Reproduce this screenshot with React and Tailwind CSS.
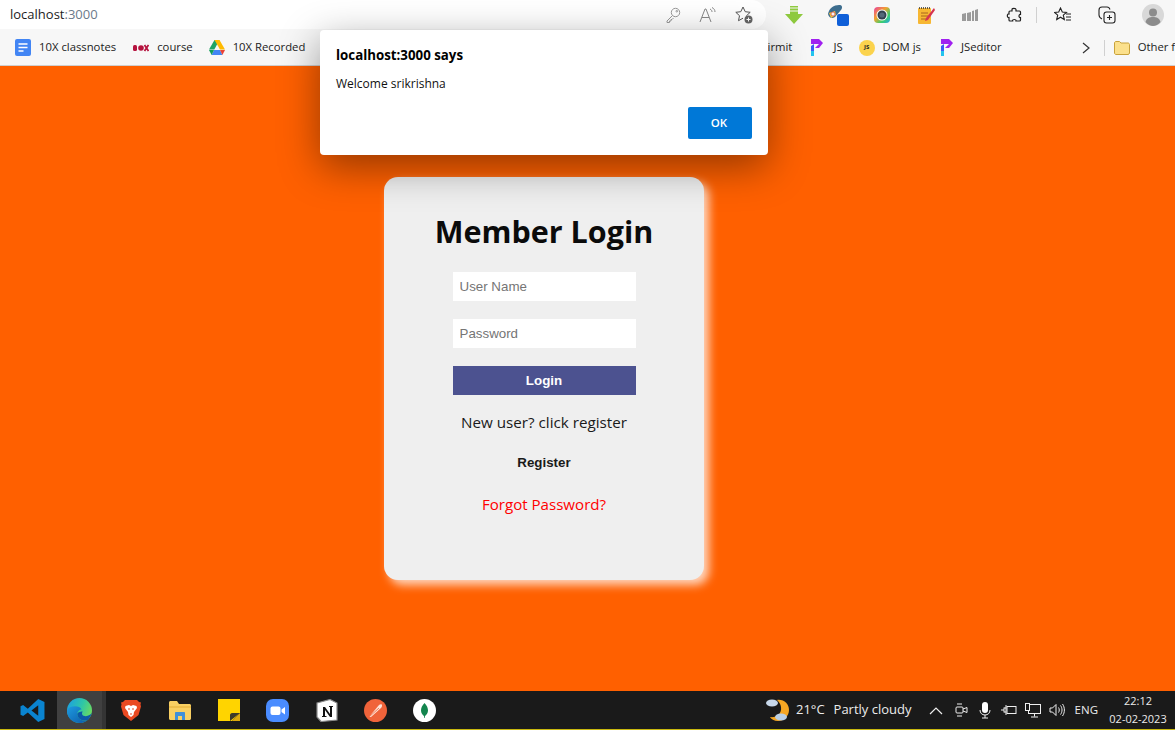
import React from "react";

const ui = "font-['Open_Sans','Noto_Sans',sans-serif]";
const arial = "font-['Liberation_Sans',sans-serif]";

function DocsIcon() {
  return (
    <svg width="16" height="17" viewBox="0 0 16 17">
      <rect width="16" height="17" rx="2" fill="#4285f4" />
      <path d="M3.5 5h9M3.5 8.5h9M3.5 12h5" stroke="#fff" strokeWidth="1.6" />
    </svg>
  );
}

function CourseIcon() {
  return (
    <svg width="16" height="8" viewBox="0 0 16 8">
      <rect x="0" y="1" width="4" height="6" rx="1.5" fill="#b5123e" />
      <circle cx="8" cy="4" r="2.8" fill="#b5123e" />
      <path d="M11.5 1l4 6M15.5 1l-4 6" stroke="#b5123e" strokeWidth="1.8" />
    </svg>
  );
}

function DriveIcon() {
  return (
    <svg width="16" height="15" viewBox="0 0 16 15">
      <path d="M5.5 0h5L5.300 9.500H0z" fill="#1fa463" />
      <path d="M5.5 0h5L16 9.500h-5z" fill="#ffba00" />
      <path d="M5 10h6l2.400 5H2.600z" fill="#4285f4" />
      <path d="M0 10h5l-2.400 5z" fill="#0f9d58" />
      <path d="M11 10h5l-2.600 5z" fill="#ea4335" />
    </svg>
  );
}

function PrepIcon() {
  return (
    <svg width="12" height="17" viewBox="0 0 12 17">
      <path d="M0 0h8l4 4-4 5H4L8 5H0z" fill="#a020f0" />
      <path d="M0 7l3-2v7H0z" fill="#3a5cf5" />
      <path d="M0 12h3v5H0z" fill="#22c4ee" />
    </svg>
  );
}

function BookmarkItem({ icon, label, className = "", labelClass = "ml-2" }) {
  return (
    <div className={`flex items-center shrink-0 whitespace-nowrap ${className}`}>
      {icon}
      <span className={labelClass}>{label}</span>
    </div>
  );
}

function ToolbarSlot({ children, className = "" }) {
  return <div className={`flex items-center justify-center h-full shrink-0 ${className}`}>{children}</div>;
}

function BrowserChrome() {
  return (
    <div className={`bg-[#f7f7f7] shrink-0 border-b border-[#cfcfcf] ${ui}`}>
      <div className="flex h-[30px] items-center">
        <div className="flex items-center shrink-0 w-[766px] h-[29px] bg-white rounded-r-[15px] pl-[10px] pr-[12px] -mt-[1px]">
          <span className="text-[13px] text-[#1c1c1c]">
            localhost<span className="text-[#6b7a8a]">:3000</span>
          </span>
          <div className="ml-auto flex items-center gap-[17px]">
            <svg width="18" height="18" viewBox="0 0 18 18" fill="none" stroke="#9a9a9a" strokeWidth="1">
              <circle cx="11.500" cy="6.500" r="4.200" />
              <circle cx="12.800" cy="5.200" r="0.800" />
              <path d="M8.500 9.500L3 15v1.500h2.500V15H7v-1.500h1l1.500-1.500" />
            </svg>
            <svg width="18" height="18" viewBox="0 0 18 18" fill="none" stroke="#888" strokeWidth="1">
              <path d="M1 16L6 3h1l5 13M3 11.500h7" />
              <path d="M11 3c1.500.8 2 1.800 2 3M13 1.500c2 1 3 2.600 3 4.500" />
            </svg>
            <svg width="20" height="20" viewBox="0 0 20 20" fill="none" stroke="#555" strokeWidth="1">
              <path d="M9 2l2.200 4.700 5 .6-3.700 3.400.6 2.800M9 2L6.800 6.700l-5 .6 3.700 3.400-1 5 4.500-2.500" />
              <circle cx="14.500" cy="14.500" r="4" fill="#666" stroke="none" />
              <path d="M14.500 12.500v4M12.500 14.500h4" stroke="#fff" />
            </svg>
          </div>
        </div>
        <div className="flex items-center h-full pl-[6px]">
          <ToolbarSlot className="w-[44px]">
            <svg width="18" height="19" viewBox="0 0 18 19">
              <path d="M5 0h8v8h5l-9 10L0 8h5z" fill="#8fca3f" />
              <path d="M5 2h8M5 5h8" stroke="#f7f7f7" strokeWidth="1" />
            </svg>
          </ToolbarSlot>
          <ToolbarSlot className="w-[44px]">
            <svg width="22" height="22" viewBox="0 0 22 22">
              <path d="M1 10C2 4 7 1 12 1c3 0 4 2 2 5l-6 7C5 15 2 14 1 10z" fill="#3d6d8e" />
              <path d="M2 9l6-2 1 4-5 3z" fill="#f5c23c" />
              <circle cx="6" cy="10" r="2" fill="#f4f4f4" stroke="#c33" strokeWidth="0.6" />
              <rect x="10" y="10" width="12" height="12" rx="2" fill="#0f5fd8" />
            </svg>
          </ToolbarSlot>
          <ToolbarSlot className="w-[44px]">
            <svg width="16" height="16" viewBox="0 0 16 16">
              <defs>
                <linearGradient id="ring" x1="0" y1="0" x2="1" y2="1">
                  <stop offset="0" stopColor="#e93ea0" />
                  <stop offset="0.4" stopColor="#f2a22f" />
                  <stop offset="0.7" stopColor="#3ccf6b" />
                  <stop offset="1" stopColor="#27a5e8" />
                </linearGradient>
              </defs>
              <rect width="16" height="16" rx="4" fill="url(#ring)" />
              <circle cx="8" cy="8" r="5.500" fill="#fff" />
              <circle cx="8" cy="8" r="4.500" fill="#33424f" />
              <circle cx="8" cy="8" r="2.600" fill="#55697a" />
            </svg>
          </ToolbarSlot>
          <ToolbarSlot className="w-[44px]">
            <svg width="17" height="17" viewBox="0 0 17 17">
              <rect x="0" y="1" width="13" height="16" rx="1" fill="#f7b733" />
              <path d="M1 1h11" stroke="#333" strokeWidth="1.400" strokeDasharray="1 1" />
              <path d="M3 6h7M3 9h7M3 12h5" stroke="#a8641e" strokeWidth="1" />
              <path d="M16 1L8 11l-1 3 3-1L17 3z" fill="#d6344f" />
            </svg>
          </ToolbarSlot>
          <ToolbarSlot className="w-[44px]">
            <svg width="16" height="12" viewBox="0 0 16 12" fill="#9a9a9a">
              <path d="M0 5l4-1v8H0zM5 4l4-1v9H5zM10 2l2-.5V12h-2zM13 1l3-1v12h-3z" />
            </svg>
          </ToolbarSlot>
          <ToolbarSlot className="w-[44px]">
            <svg width="16" height="16" viewBox="0 0 16 16" fill="none" stroke="#222" strokeWidth="1.200">
              <path d="M6 2.500C6 1 10 1 10 2.500V4h3.500c.6 0 1 .4 1 1v2.500c-2-.6-2 3.600 0 3V13c0 .6-.4 1-1 1H10c.6-2-4-2-3.400 0H4c-.6 0-1-.4-1-1v-2.500C.8 11 .8 6.500 3 7V5c0-.6.4-1 1-1h2z" />
            </svg>
          </ToolbarSlot>
          <div className="w-px h-[16px] shrink-0 bg-[#d0d0d0]" />
          <ToolbarSlot className="w-[48px] ml-[2px]">
            <svg width="18" height="17" viewBox="0 0 18 17" fill="none" stroke="#222" strokeWidth="1.100">
              <path d="M6.500 1l1.800 4 4.200.4-3.200 2.800 1 4.300-3.800-2.300-3.800 2.300 1-4.300L.5 5.400 4.700 5z" />
              <path d="M12 7h5M12 10h5M12 13h5" />
            </svg>
          </ToolbarSlot>
          <ToolbarSlot className="w-[40px]">
            <svg width="18" height="18" viewBox="0 0 18 18" fill="none" stroke="#222" strokeWidth="1.100">
              <rect x="6" y="6" width="11" height="11" rx="2.500" />
              <path d="M11.500 9v5M9 11.500h5" />
              <path d="M4 13C2 12 1 11 1 9V4c0-1.700 1.300-3 3-3h5c1.500 0 2.500.8 3 2.500" />
            </svg>
          </ToolbarSlot>
          <ToolbarSlot className="w-[48px] pl-[4px]">
            <svg width="22" height="22" viewBox="0 0 22 22">
              <circle cx="11" cy="11" r="11" fill="#d8d8d8" />
              <circle cx="11" cy="8.500" r="4" fill="#8c8c8c" />
              <path d="M3.500 18c1-4 4-5 7.500-5s6.500 1 7.500 5c-2 2.500-5 4-7.500 4s-5.500-1.500-7.500-4z" fill="#8c8c8c" />
            </svg>
          </ToolbarSlot>
        </div>
      </div>
      <div className="flex items-center h-[35px] text-[11.300px] text-[#222] overflow-hidden">
        <BookmarkItem icon={<DocsIcon />} label="10X classnotes" className="ml-[15px]" />
        <BookmarkItem icon={<CourseIcon />} label="course" className="ml-[17px]" />
        <BookmarkItem icon={<DriveIcon />} label="10X Recorded" className="ml-[16px]" />
        <span className="ml-[456px] shrink-0">Tirmit</span>
        <BookmarkItem icon={<PrepIcon />} label="JS" className="ml-[19px]" labelClass="ml-[10px]" />
        <BookmarkItem
          icon={
            <span className="flex items-center justify-center w-[16px] h-[16px] rounded-full bg-[#fbd34d] text-[6px] font-bold">
              JS
            </span>
          }
          label="DOM js"
          className="ml-[16px]"
        />
        <BookmarkItem icon={<PrepIcon />} label="JSeditor" className="ml-[20px]" />
        <svg className="ml-[79px] shrink-0" width="10" height="12" viewBox="0 0 10 12" fill="none" stroke="#333" strokeWidth="1.200">
          <path d="M2 1l6 5-6 5" />
        </svg>
        <div className="ml-[13px] w-px h-[16px] bg-[#d0d0d0] shrink-0" />
        <BookmarkItem
          icon={
            <svg width="16" height="14" viewBox="0 0 16 14">
              <path d="M.5 2c0-.8.6-1.500 1.500-1.500h3.500L7 2h7c.8 0 1.500.7 1.500 1.500V12c0 .8-.7 1.500-1.500 1.500H2C1.200 13.500.5 12.800.5 12z" fill="#fbe08c" stroke="#c8a23c" />
            </svg>
          }
          label="Other favorites"
          className="ml-[9px]"
        />
      </div>
    </div>
  );
}

function LoginCard() {
  return (
    <div className="flex flex-col items-center w-[320px] h-[403px] mt-[111px] ml-[384px] rounded-[14px] bg-[#efefef] pt-[32px] shadow-[5px_5px_10px_rgba(255,255,255,0.75)]">
      <h1 className={`text-[30.500px] leading-[44px] font-bold text-[#0b0b0b] ${ui}`}>Member Login</h1>
      <input
        placeholder="User Name"
        className={`mt-[19px] w-[183px] h-[29px] bg-white px-[7px] text-[13.330px] outline-none placeholder:text-[#757575] ${arial}`}
      />
      <input
        placeholder="Password"
        type="password"
        className={`mt-[18px] w-[183px] h-[29px] bg-white px-[7px] text-[13.330px] outline-none placeholder:text-[#757575] ${arial}`}
      />
      <button className={`mt-[18px] w-[183px] h-[29px] bg-[#4c5290] text-white text-[13.330px] font-bold ${arial}`}>
        Login
      </button>
      <p className={`mt-[15px] text-[15.200px] leading-[24px] text-[#1a1a1a] ${ui}`}>New user? click register</p>
      <button className={`mt-[21px] text-[13.330px] leading-[16px] font-bold text-[#1a1a1a] ${arial}`}>
        Register
      </button>
      <a className={`mt-[21px] text-[15.100px] leading-[24px] text-[#ff0000] ${ui}`}>Forgot Password?</a>
    </div>
  );
}

function AlertDialog() {
  return (
    <div className={`absolute left-[320px] top-[30px] w-[448px] h-[125px] rounded-[4px] bg-white p-4 shadow-[0_12px_40px_rgba(0,0,0,0.42)] ${ui}`}>
      <p className="text-[13.300px] leading-[18px] font-bold text-black">localhost:3000 says</p>
      <p className="mt-[11px] text-[12px] leading-[18px] text-[#111]">Welcome srikrishna</p>
      <div className="flex justify-end mt-[14px]">
        <button className="w-[64px] h-[32px] rounded-[2px] bg-[#0078d7] text-white text-[11.500px] font-semibold pr-[2px]">OK</button>
      </div>
    </div>
  );
}

function TaskButton({ children, active }) {
  return (
    <div className={`flex items-center justify-center w-[49px] h-full ${active ? "bg-[#404040] border-r-4 border-[#343434]" : ""}`}>
      {children}
    </div>
  );
}

function Taskbar() {
  return (
    <div className={`flex items-center h-[39px] shrink-0 bg-[#1a1a1a] text-[#ececec] border-b border-[#c9b80f] ${ui}`}>
      <div className="flex h-full pl-[8px]">
        <TaskButton>
          <svg width="25" height="25" viewBox="0 0 24 24">
            <path d="M17.500 1L23.500 3.800V20.200L17.500 23 7.500 13.800 3 17.200.5 16V8l2.500-1.200 4.500 3.400zM17.500 7L11 12l6.500 5z" fill="#0a84d0" />
          </svg>
        </TaskButton>
        <TaskButton active>
          <svg width="25" height="25" viewBox="0 0 24 24">
            <defs>
              <linearGradient id="edgeTop" x1="0" y1="0.2" x2="1" y2="0.6">
                <stop offset="0" stopColor="#1ba0e2" />
                <stop offset="0.55" stopColor="#2fc6a6" />
                <stop offset="1" stopColor="#6fdc5c" />
              </linearGradient>
              <linearGradient id="edgeLow" x1="0" y1="0" x2="1" y2="1">
                <stop offset="0" stopColor="#1e9be0" />
                <stop offset="1" stopColor="#0c5aa8" />
              </linearGradient>
            </defs>
            <circle cx="12" cy="12" r="12" fill="url(#edgeTop)" />
            <path d="M0 12c0 7 5.500 12 12 12 3 0 6-1 8-3-3 1-9 1-10-5-.5-3 2-5 4-5-1-2-3.500-3-6-3C4 8 1 9.500 0 12z" fill="url(#edgeLow)" />
            <path d="M10 16c1 6 7 6 10 5 2-2 3.500-4.500 4-7-1 2-3.500 3.500-6 3.500-3 0-4.500-2-3-4.500-2.500 0-5.500 1-5 3z" fill="#0c5aa8" />
          </svg>
        </TaskButton>
        <TaskButton>
          <svg width="20" height="21" viewBox="0 0 20 21">
            <path d="M4 0h12l2 2 2 .5-.5 2 .5 2L17.500 15 10 21 2.500 15 0 6.500l.5-2L0 2.500 2 2z" fill="#ea4a22" />
            <path d="M4.500 6l3.500-1 2 1 2-1 3.500 1 .5 2-3 4-.5 3L10 17l-2.500-2-.5-3-3-4z" fill="#fff" />
            <path d="M7 9h2M11 9h2M9 14h2" stroke="#ea4a22" strokeWidth="1.200" />
          </svg>
        </TaskButton>
        <TaskButton>
          <svg width="22" height="19" viewBox="0 0 22 19">
            <path d="M0 1.500C0 .7.700 0 1.500 0H8l2 3h10.500c.8 0 1.500.7 1.500 1.500V17.500c0 .8-.7 1.500-1.500 1.500h-19C.7 19 0 18.300 0 17.500z" fill="#f8cf62" />
            <path d="M0 6h22" stroke="#e3ad35" strokeWidth="1" />
            <path d="M6 19v-7c0-.6.400-1 1-1h8c.6 0 1 .4 1 1v7h-3v-4H9v4z" fill="#3f8fd8" />
          </svg>
        </TaskButton>
        <TaskButton>
          <svg width="22" height="22" viewBox="0 0 22 22">
            <path d="M0 0h22v14l-8 8H0z" fill="#ffd400" />
            <path d="M22 14v8h-8z" fill="#dca90e" />
            <path d="M12 22v-6c0-1 1-2 2-2h8z" fill="#3d3a2a" />
          </svg>
        </TaskButton>
        <TaskButton>
          <svg width="23" height="23" viewBox="0 0 23 23">
            <rect width="23" height="23" rx="7" fill="#4a8cff" />
            <rect x="4.500" y="7.500" width="10" height="8.500" rx="2" fill="#fff" />
            <path d="M15.500 10.500l3.500-2.500v7.500l-3.500-2.500z" fill="#fff" />
          </svg>
        </TaskButton>
        <TaskButton>
          <svg width="22" height="23" viewBox="0 0 22 23">
            <path d="M1 4l13-3.500L21 4v17L5 22.500 1 18z" fill="#fff" stroke="#8a8a8a" strokeWidth="1.200" />
            <path d="M7 8h2l5 7V8h-1V7h4v1h-1v10h-2L9 11v6h1.500v1H6v-1h1z" fill="#111" />
          </svg>
        </TaskButton>
        <TaskButton>
          <svg width="23" height="23" viewBox="0 0 23 23">
            <circle cx="11.500" cy="11.500" r="11.500" fill="#f0633a" />
            <path d="M5 18L15 6c1-1 3-1 3 0 0 1 0 2-1 3L7 18z" fill="#fde3d8" />
            <path d="M5 18l10-9" stroke="#f0633a" strokeWidth="0.800" />
          </svg>
        </TaskButton>
        <TaskButton>
          <svg width="23" height="23" viewBox="0 0 23 23">
            <circle cx="11.500" cy="11.500" r="11.500" fill="#fff" />
            <path d="M11.500 4c2.500 2.500 3.500 5 3.500 7.500s-1.500 4.500-3 5.500l-.2 2h-.6l-.2-2c-1.500-1-3-3-3-5.500S9 6.500 11.500 4z" fill="#13854e" />
          </svg>
        </TaskButton>
      </div>
      <div className="ml-auto flex items-center h-full text-[13px]">
        <svg width="26" height="26" viewBox="0 0 26 26">
          <path d="M12 3c7-1 12 4 12 10s-5 11-11 11c-4 0-7-2-8-4 6 1 12-3 11-10-.3-3-2-5-4-7z" fill="#f5a623" />
          <ellipse cx="7" cy="6" rx="6" ry="3.500" fill="#c8d8ea" />
          <ellipse cx="16" cy="20" rx="6" ry="3.500" fill="#b9cfe6" />
        </svg>
        <span className="ml-[5px]">21°C</span>
        <span className="ml-[9px] w-[89px] whitespace-nowrap">Partly cloudy</span>
        <svg className="ml-[6px]" width="14" height="9" viewBox="0 0 14 9" fill="none" stroke="#eee" strokeWidth="1.200">
          <path d="M1 8l6-6 6 6" />
        </svg>
        <div className="flex items-center ml-[6px]">
          <div className="flex items-center justify-center w-[24px]">
            <svg width="14" height="16" viewBox="0 0 14 16" fill="none" stroke="#eee">
              <rect x="2" y="5" width="7" height="6" rx="1" />
              <path d="M9 7l4-1.500v5L9 9M3 2h5M3 14h5" />
            </svg>
          </div>
          <div className="flex items-center justify-center w-[24px]">
            <svg width="12" height="17" viewBox="0 0 12 17">
              <rect x="3" y="0" width="6" height="11" rx="3" fill="#fff" />
              <path d="M1 8c0 3 2 5 5 5s5-2 5-5M6 13v3M3 16h6" fill="none" stroke="#eee" />
            </svg>
          </div>
          <div className="flex items-center justify-center w-[24px]">
            <svg width="16" height="12" viewBox="0 0 16 12" fill="none" stroke="#eee">
              <rect x="6" y="2.500" width="9" height="7" />
              <path d="M0 6h3M3 3.500v5M3 4h2M3 8h2M5 1v10" />
            </svg>
          </div>
          <div className="flex items-center justify-center w-[24px]">
            <svg width="16" height="15" viewBox="0 0 16 15" fill="none" stroke="#eee">
              <rect x="3.500" y="1.500" width="12" height="9" />
              <rect x="0.500" y="0.500" width="4" height="7" fill="#1a1a1a" />
              <path d="M9.500 10.500v3M6 14h7" />
            </svg>
          </div>
          <div className="flex items-center justify-center w-[24px]">
            <svg width="16" height="14" viewBox="0 0 16 14" fill="none" stroke="#eee">
              <path d="M1 5h2.500L7 1.500v11L3.500 9H1z" />
              <path d="M9.500 4.500c1 1.500 1 3.500 0 5M11.500 2.500c2 2.500 2 6.500 0 9M13.500 1c2.500 3.500 2.500 8.500 0 12" />
            </svg>
          </div>
        </div>
        <span className="ml-[6px] text-[11.500px]">ENG</span>
        <div className="flex flex-col items-center w-[77px] text-[11px] leading-[18px] pl-[3px]">
          <span>22:12</span>
          <span>02-02-2023</span>
        </div>
      </div>
    </div>
  );
}

export default function App() {
  return (
    <div className="relative flex flex-col w-[1175px] h-[730px] overflow-hidden bg-[#ff6000]">
      <BrowserChrome />
      <main className="flex-1 flex min-h-0">
        <LoginCard />
      </main>
      <Taskbar />
      <AlertDialog />
    </div>
  );
}
